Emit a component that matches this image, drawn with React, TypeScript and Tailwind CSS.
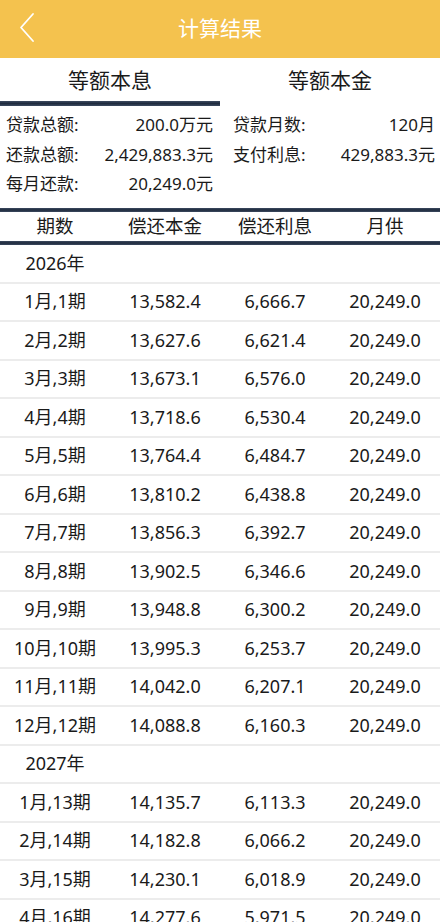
import React from "react";

const font = { fontFamily: '"Noto Sans", "Noto Sans CJK SC", sans-serif' };

type Row = { p: string; a: string; b: string; c: string } | { year: string };

const rows: Row[] = [
  { year: "2026年" },
  { p: "1月,1期", a: "13,582.4", b: "6,666.7", c: "20,249.0" },
  { p: "2月,2期", a: "13,627.6", b: "6,621.4", c: "20,249.0" },
  { p: "3月,3期", a: "13,673.1", b: "6,576.0", c: "20,249.0" },
  { p: "4月,4期", a: "13,718.6", b: "6,530.4", c: "20,249.0" },
  { p: "5月,5期", a: "13,764.4", b: "6,484.7", c: "20,249.0" },
  { p: "6月,6期", a: "13,810.2", b: "6,438.8", c: "20,249.0" },
  { p: "7月,7期", a: "13,856.3", b: "6,392.7", c: "20,249.0" },
  { p: "8月,8期", a: "13,902.5", b: "6,346.6", c: "20,249.0" },
  { p: "9月,9期", a: "13,948.8", b: "6,300.2", c: "20,249.0" },
  { p: "10月,10期", a: "13,995.3", b: "6,253.7", c: "20,249.0" },
  { p: "11月,11期", a: "14,042.0", b: "6,207.1", c: "20,249.0" },
  { p: "12月,12期", a: "14,088.8", b: "6,160.3", c: "20,249.0" },
  { year: "2027年" },
  { p: "1月,13期", a: "14,135.7", b: "6,113.3", c: "20,249.0" },
  { p: "2月,14期", a: "14,182.8", b: "6,066.2", c: "20,249.0" },
  { p: "3月,15期", a: "14,230.1", b: "6,018.9", c: "20,249.0" },
  { p: "4月,16期", a: "14,277.6", b: "5,971.5", c: "20,249.0" },
];

function Summary({ label, value }: { label: string; value: string }) {
  return (
    <div className="flex h-[29.5px] items-center justify-between">
      <span>{label}</span>
      <span>{value}</span>
    </div>
  );
}

export default function App() {
  return (
    <div className="h-[922px] w-[440px] overflow-hidden bg-white text-[#1a1a1a]" style={font}>
      <div className="relative flex h-[58px] items-center justify-center bg-[#f4c24e]">
        <svg className="absolute left-[18px] top-[12px]" width="20" height="32" viewBox="0 0 20 32" fill="none">
          <path d="M15 2 L3 15.5 L15 29" stroke="#fff" strokeWidth="1.8" strokeLinecap="round" strokeLinejoin="round" />
        </svg>
        <span className="text-[21px] text-white">计算结果</span>
      </div>

      <div className="flex h-[43px] text-[21px]">
        <div className="flex flex-1 items-center justify-center pt-[2px]">等额本息</div>
        <div className="flex flex-1 items-center justify-center pt-[2px]">等额本金</div>
      </div>
      <div className="h-[5px] w-[220px] bg-gradient-to-b from-[#3d4a60] via-[#1f2b3e] to-[#3d4a60]" />

      <div className="grid grid-cols-[207px_1fr] gap-x-[20px] pl-[6px] pr-[5px] pt-[4px] text-[17px]">
        <div>
          <Summary label="贷款总额:" value="200.0万元" />
          <Summary label="还款总额:" value="2,429,883.3元" />
          <Summary label="每月还款:" value="20,249.0元" />
        </div>
        <div>
          <Summary label="贷款月数:" value="120月" />
          <Summary label="支付利息:" value="429,883.3元" />
        </div>
      </div>

      <div className="mt-[9px] h-[4px] bg-gradient-to-b from-[#3d4a60] via-[#1f2b3e] to-[#3d4a60]" />
      <div className="grid h-[29.5px] grid-cols-4 items-center text-center text-[18.5px]">
        <span>期数</span>
        <span>偿还本金</span>
        <span>偿还利息</span>
        <span>月供</span>
      </div>
      <div className="h-[4px] bg-gradient-to-b from-[#3d4a60] via-[#1f2b3e] to-[#3d4a60]" />

      <div className="text-[18px]">
        {rows.map((r, i) =>
          "year" in r ? (
            <div key={i} className="grid h-[38.5px] grid-cols-4 items-center border-b-2 border-[#ececec] text-center">
              <span>{r.year}</span>
            </div>
          ) : (
            <div key={i} className="grid h-[38.5px] grid-cols-4 items-center border-b-2 border-[#ececec] text-center">
              <span>{r.p}</span>
              <span>{r.a}</span>
              <span>{r.b}</span>
              <span>{r.c}</span>
            </div>
          )
        )}
      </div>
    </div>
  );
}
